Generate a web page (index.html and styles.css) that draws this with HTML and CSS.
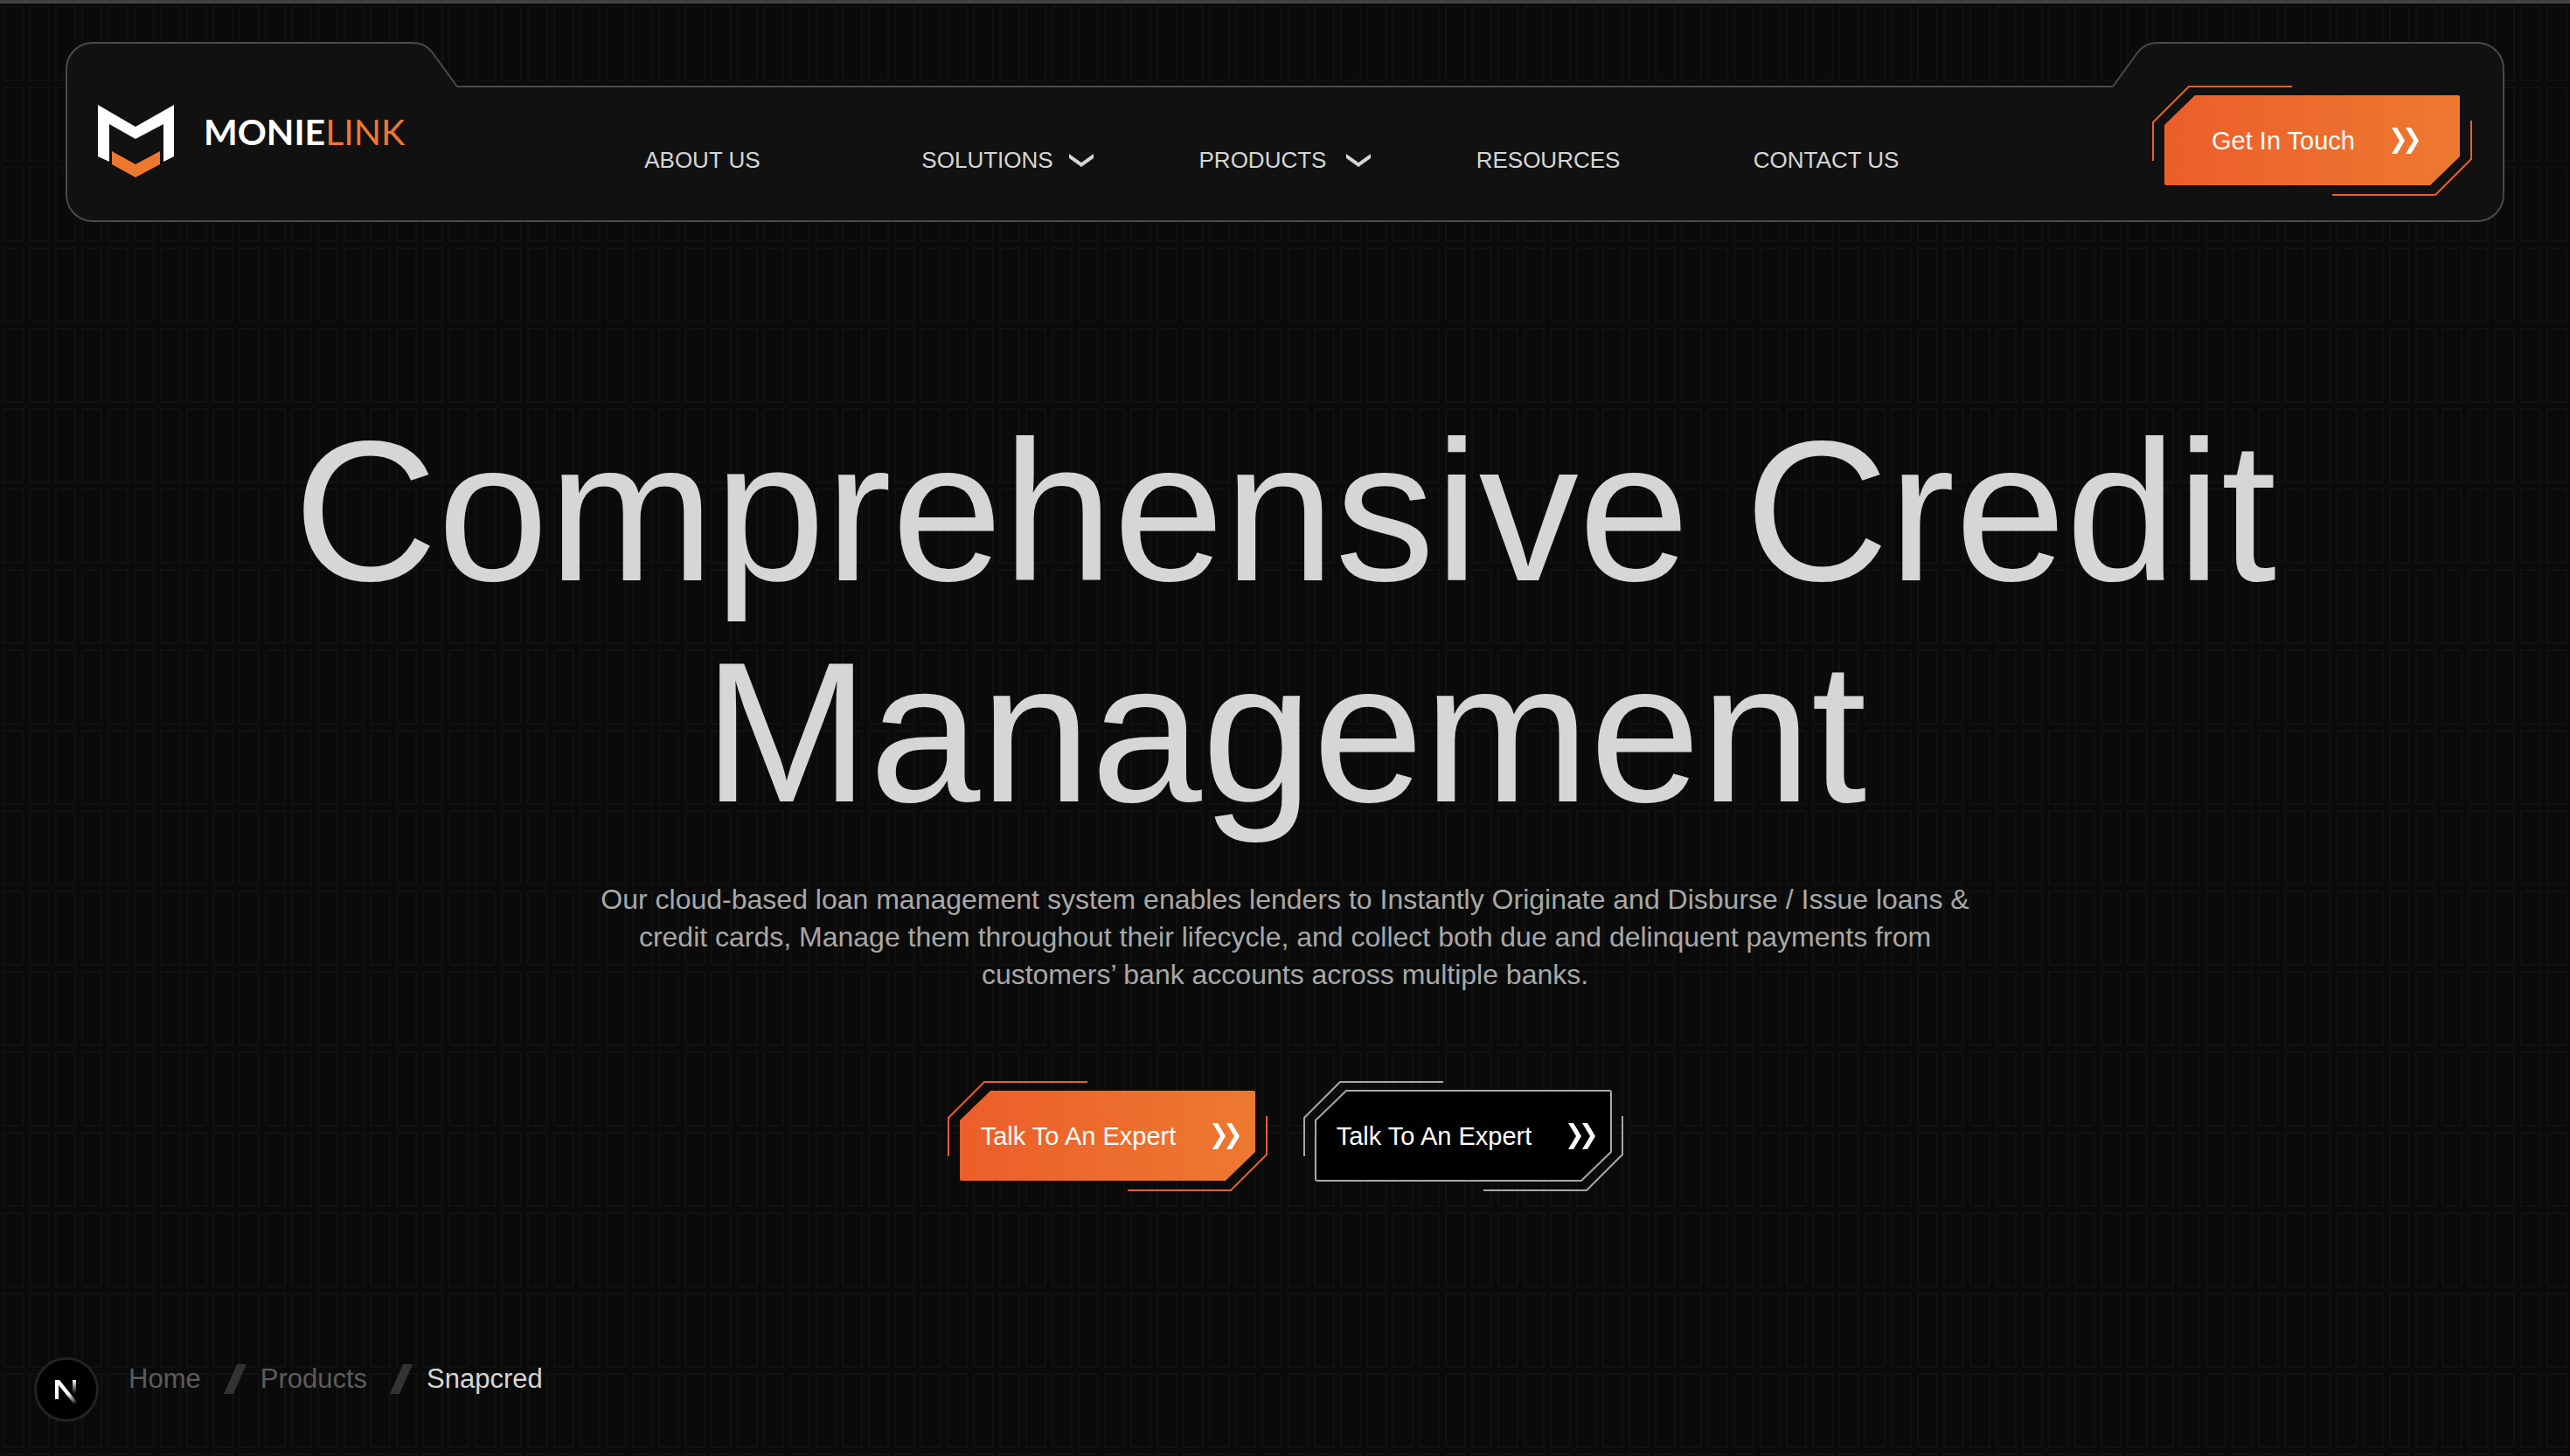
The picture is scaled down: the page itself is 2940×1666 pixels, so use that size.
FILE: index.html
```html
<!DOCTYPE html>
<html lang="en">
<head>
<meta charset="utf-8">
<meta name="viewport" content="width=device-width, initial-scale=1">
<title>Snapcred | Monielink</title>
<link rel="stylesheet" href="styles.css">
</head>
<body>
<svg class="defs" width="0" height="0" aria-hidden="true">
  <defs>
    <linearGradient id="flame" x1="0" y1="0" x2="1" y2="0">
      <stop offset="0" stop-color="#ec5e2a"/>
      <stop offset="1" stop-color="#ed7930"/>
    </linearGradient>
    <symbol id="frame" viewBox="0 0 366 126">
      <path class="frame-body" d="M49 11H350Q352 11 352 13V81L318 114H16Q14 114 14 112V45Z"/>
      <path class="frame-line" d="M160 1H42L1 42V86M365 40V84L324 125H206"/>
    </symbol>
    <symbol id="arrows" viewBox="0 0 32 30">
      <path fill="#fff" d="M0 0H6L15 15L6 30H0L9 15ZM16 0H22L31 15L22 30H16L25 15Z"/>
    </symbol>
    <symbol id="chevron" viewBox="0 0 28 15">
      <path fill="#d6d6d6" d="M0 0L14 10L28 0V5L14 15L0 5Z"/>
    </symbol>
  </defs>
</svg>

<header class="header">
  <div class="panel" aria-hidden="true">
    <svg class="panel-end" viewBox="0 0 450 206">
      <path class="panel-shape" d="M452 51H448L421 14C413 3 406 1 395 1H31A30 30 0 0 0 1 31V175A30 30 0 0 0 31 205H452"/>
    </svg>
    <div class="panel-middle"></div>
    <svg class="panel-end" viewBox="0 0 450 206">
      <path class="panel-shape" d="M-2 51H2L29 14C37 3 44 1 55 1H419A30 30 0 0 1 449 31V175A30 30 0 0 1 419 205H-2"/>
    </svg>
  </div>

  <a class="logo" href="#" aria-label="Monielink">
    <svg class="logo-mark" viewBox="0 0 87 83" aria-hidden="true">
      <path fill="#fff" d="M0 0L43 25L87 0V59L75 65V22L43 39L13 22V65L0 59Z"/>
      <path fill="#ee772f" d="M16 53L43 68L71 53V68L43 83L16 68Z"/>
    </svg>
    <span class="logo-text">MONIE<span class="logo-light">LINK</span></span>
  </a>

  <nav class="nav">
    <a class="nav-item" href="#">ABOUT US</a>
    <a class="nav-item" href="#">SOLUTIONS <svg class="chevron" aria-hidden="true"><use href="#chevron"/></svg></a>
    <a class="nav-item" href="#">PRODUCTS <svg class="chevron" aria-hidden="true"><use href="#chevron"/></svg></a>
    <a class="nav-item" href="#">RESOURCES</a>
    <a class="nav-item" href="#">CONTACT US</a>
  </nav>

  <button class="cta" type="button">
    <svg class="cta-frame" aria-hidden="true"><use href="#frame"/></svg>
    <span>Get In Touch</span>
    <svg class="arrows" aria-hidden="true"><use href="#arrows"/></svg>
  </button>
</header>

<main class="hero">
  <h1 class="title">Comprehensive Credit<br>Management</h1>
  <p class="lead">Our cloud-based loan management system enables lenders to Instantly Originate and Disburse / Issue loans &amp;<br>credit cards, Manage them throughout their lifecycle, and collect both due and delinquent payments from<br>customers’ bank accounts across multiple banks.</p>
  <div class="actions">
    <button class="cta" type="button">
      <svg class="cta-frame" aria-hidden="true"><use href="#frame"/></svg>
      <span>Talk To An Expert</span>
      <svg class="arrows" aria-hidden="true"><use href="#arrows"/></svg>
    </button>
    <button class="cta cta-dark" type="button">
      <svg class="cta-frame" aria-hidden="true"><use href="#frame"/></svg>
      <span>Talk To An Expert</span>
      <svg class="arrows" aria-hidden="true"><use href="#arrows"/></svg>
    </button>
  </div>
</main>

<nav class="crumbs" aria-label="Breadcrumb">
  <a class="crumb" href="#">Home</a>
  <svg class="slash" viewBox="0 0 26 34" aria-hidden="true"><path fill="#333" d="M15 0H26L11 34H0Z"/></svg>
  <a class="crumb" href="#">Products</a>
  <svg class="slash" viewBox="0 0 26 34" aria-hidden="true"><path fill="#333" d="M15 0H26L11 34H0Z"/></svg>
  <span class="crumb crumb-current" aria-current="page">Snapcred</span>
</nav>

<button class="dev-badge" type="button" aria-label="Open Next.js Dev Tools">
  <svg class="dev-icon" viewBox="0 0 26 28" aria-hidden="true">
    <defs>
      <linearGradient id="fadeA" gradientUnits="userSpaceOnUse" x1="15" y1="16" x2="24" y2="28">
        <stop offset="0" stop-color="#fff"/><stop offset="1" stop-color="#fff" stop-opacity="0"/>
      </linearGradient>
      <linearGradient id="fadeB" gradientUnits="userSpaceOnUse" x1="22" y1="0" x2="22" y2="16">
        <stop offset="0" stop-color="#fff"/><stop offset="1" stop-color="#fff" stop-opacity="0"/>
      </linearGradient>
    </defs>
    <path fill="url(#fadeA)" d="M0 0H5L25 25L22 28L4 6V22H0Z"/>
    <path fill="url(#fadeB)" d="M20 0H24V16H20Z"/>
  </svg>
</button>
</body>
</html>
```
FILE: styles.css
```css
* {
  box-sizing: border-box;
}

body {
  display: flex;
  flex-direction: column;
  min-height: 100vh;
  margin: 0;
  padding: 46px 75px 71px;
  border-top: 2px solid #3b4047;
  box-shadow: inset 0 2px #454545;
  background: #0a0a0a url("data:image/svg+xml,%3Csvg xmlns='http://www.w3.org/2000/svg' width='30' height='92'%3E%3Crect x='4' y='4' width='22' height='84' fill='none' stroke='%23111' stroke-width='2'/%3E%3C/svg%3E") 0 4px;
  font-family: "Liberation Sans", Arial, Helvetica, sans-serif;
  color: #d6d6d6;
}

a {
  color: inherit;
  text-decoration: none;
}

.defs {
  position: absolute;
}

.header {
  position: relative;
  display: grid;
  grid-template-columns: auto 1fr auto;
  align-items: center;
  min-height: 206px;
  padding: 20px 37px 0;
}

.panel {
  position: absolute;
  inset: 0;
  z-index: -1;
  display: flex;
}

.panel-end {
  flex: none;
  width: 450px;
  height: 206px;
}

.panel-shape {
  fill: #111;
  stroke: #4a4a4a;
  stroke-width: 2;
}

.panel-middle {
  flex: 1;
  margin-top: 50px;
  border: solid #4a4a4a;
  border-width: 2px 0;
  background: #111;
}

.logo {
  display: flex;
  align-items: center;
  gap: 34px;
}

.logo-mark {
  width: 87px;
  height: 83px;
}

.logo-text {
  padding-bottom: 20px;
  font: 700 41px/50px Lato, sans-serif;
  color: #fff;
}

.logo-light {
  font-weight: 400;
  color: #ee772f;
}

.nav {
  display: grid;
  grid-template-columns: repeat(5, 1fr);
  gap: 121px;
  margin: 0 260px 0 274px;
  padding-top: 44px;
}

.nav-item {
  display: flex;
  justify-content: space-between;
  align-items: center;
  font-size: 26px;
  line-height: 30px;
  white-space: nowrap;
}

.chevron {
  width: 28px;
  height: 15px;
}

.cta {
  position: relative;
  isolation: isolate;
  display: flex;
  justify-content: center;
  align-items: center;
  gap: 42px;
  width: 366px;
  height: 126px;
  padding: 0 0 0 8px;
  border: 0;
  background: none;
  font: 29px/32px "Liberation Sans", Arial, Helvetica, sans-serif;
  color: #fff;
  fill: url(#flame);
  stroke: #ec5e2a;
  stroke-width: 0;
}

.cta-frame {
  position: absolute;
  inset: 0;
  z-index: -1;
  width: 100%;
  height: 100%;
}

.frame-line {
  fill: none;
  stroke-width: 2;
}

.arrows {
  width: 32px;
  height: 30px;
}

.cta-dark {
  fill: #000;
  stroke: #a8a8a8;
  stroke-width: 2;
}

.cta-dark .arrows {
  stroke: none;
}

.hero {
  display: flex;
  flex-direction: column;
  align-items: center;
  padding-top: 205px;
  text-align: center;
}

.title {
  margin: 0;
  font-size: 228px;
  font-weight: 400;
  line-height: 253px;
}

.lead {
  margin: 43px 0 100px;
  font-size: 32px;
  line-height: 43px;
  color: #a8a8a8;
}

.actions {
  display: flex;
  gap: 41px;
}

.crumbs {
  display: flex;
  align-items: center;
  margin-top: auto;
  padding-left: 72px;
  font-size: 31px;
  line-height: 34px;
}

.slash {
  width: 26px;
  height: 34px;
  margin: 0 16px 0 26px;
}

.crumb {
  color: #5c5c5c;
}

.crumb-current {
  color: #d6d6d6;
}

.dev-badge {
  position: fixed;
  left: 39px;
  bottom: 39px;
  display: flex;
  justify-content: center;
  align-items: center;
  width: 74px;
  height: 74px;
  padding: 6px 0 0;
  border: 3px solid #222;
  border-radius: 50%;
  background: #000;
}

.dev-icon {
  width: 26px;
  height: 28px;
}
```
